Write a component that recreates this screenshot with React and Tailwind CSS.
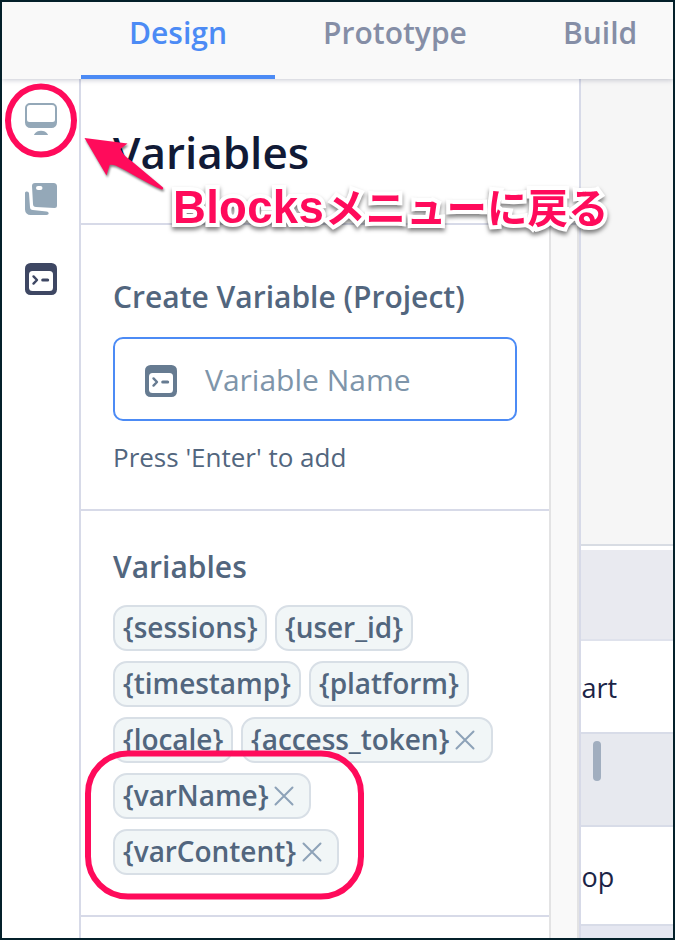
import React from "react";

function TerminalIcon({ className }) {
  return (
    <svg viewBox="0 0 32 32" className={className} fill="none">
      <rect width="32" height="32" rx="5.5" fill="currentColor" />
      <rect x="4" y="8" width="24" height="20" rx="3.5" fill="#fff" />
      <path d="M8.500 13.400 12 17l-3.500 3.600" stroke="currentColor" strokeWidth="2.400" strokeLinecap="round" strokeLinejoin="round" />
      <path d="M17.700 17h5" stroke="currentColor" strokeWidth="3" strokeLinecap="round" />
    </svg>
  );
}

function MonitorIcon() {
  return (
    <svg viewBox="0 0 32 32" className="size-8 text-[#94a8b8]" fill="currentColor">
      <path fillRule="evenodd" d="M5 0h22a5 5 0 0 1 5 5v14.500a5.500 5.500 0 0 1-5.500 5.500h-21A5.500 5.500 0 0 1 0 19.500V5a5 5 0 0 1 5-5Zm0 2a3 3 0 0 0-3 3v11.500A2.500 2.500 0 0 0 4.500 19h23a2.500 2.500 0 0 0 2.500-2.500V5a3 3 0 0 0-3-3Z" />
      <path d="M9 31.500c2-2.700 4-3.700 7-3.700s5 1 7 3.700c0 .3-.2.500-.5.500h-13c-.3 0-.5-.2-.5-.5Z" />
    </svg>
  );
}

function LayersIcon() {
  return (
    <svg viewBox="0 0 32 32" className="size-8 text-[#94a8b8]" fill="currentColor">
      <path fillRule="evenodd" d="M10 0h18.500A3.500 3.500 0 0 1 32 3.500v19a2.500 2.500 0 0 1-2.500 2.500L11 24a3 3 0 0 1-3-3L7 3a3 3 0 0 1 3-3Zm3 3a2 2 0 0 0 0 4h2.500a2 2 0 0 0 0-4Z" />
      <path d="M1.500 8.500C2.800 8.300 4 9.200 4 10.500l1 13.700c.2 1.800 1 2.600 2.800 2.800l13.700 1.500c3 .3 2.800 3.500 0 3.500H5.500A5.500 5.500 0 0 1 0 26.500V10c0-.8.600-1.400 1.500-1.500Z" />
    </svg>
  );
}

function Chip({ name, width, removable }) {
  return (
    <div className={`${width} flex h-[46px] shrink-0 items-center rounded-[14px] border-2 border-[#d8dfe6] bg-[#f1f6f7] pl-2 text-[28px] leading-[36px] font-semibold text-[#52667e]`}>
      <span className="-mt-0.5 tracking-[-0.05px]">{`{${name}}`}</span>
      {removable && (
        <svg viewBox="0 0 20 20" className="ml-1.5 size-5 shrink-0 text-[#8da2b8]" fill="none" stroke="currentColor" strokeWidth="2" strokeLinecap="round">
          <path d="m1.500 1.500 17 17m0-17-17 17" />
        </svg>
      )}
    </div>
  );
}

function Header() {
  return (
    <header className="relative z-10 flex h-[77px] shrink-0 bg-[#f9f9f9] pl-[79px] text-[30px] leading-[61px] font-semibold text-[#858ea6] shadow-[0_1px_5px_rgba(30,40,80,0.25)]">
      <div className="w-[194px] shrink-0 border-b-4 border-[#4c8bf5] text-center text-[#4c8bf5]">Design</div>
      <div className="w-[240px] shrink-0 text-center">Prototype</div>
      <div className="w-[158px] shrink-0 pl-12">Build</div>
    </header>
  );
}

function Panel() {
  return (
    <main className="flex w-[502px] shrink-0 flex-col border-x-2 border-[#d7dae8]">
      <h1 className="h-[144px] shrink-0 pt-[41px] pl-8 text-[44px] leading-[64px] font-semibold text-[#111a36]">Variables</h1>
      <div className="flex flex-1 border-t-2 border-[#d7dae8]">
        <div className="flex w-[468px] shrink-0 flex-col">
          <section className="h-[286px] shrink-0 border-b-2 border-[#d7dae8] pt-[50px] pl-8 text-[#52667e]">
            <h2 className="text-[30px] leading-[43px] font-semibold">Create Variable (Project)</h2>
            <div className="mt-[19px] flex h-[84px] w-[404px] items-center rounded-[10px] border-2 border-[#4c8bf5] pl-[30px]">
              <TerminalIcon className="mt-1 size-8 text-[#667b91]" />
              <span className="ml-7 pt-px text-[30px] leading-[40px] text-[#7e95aa]">Variable Name</span>
            </div>
            <p className="mt-[19px] text-[26px] leading-[34px]">Press 'Enter' to add</p>
          </section>
          <section className="h-[406px] shrink-0 border-b-2 border-[#d7dae8] pt-[34px] pl-8">
            <h2 className="text-[30px] leading-[43px] font-semibold text-[#52667e]">Variables</h2>
            <div className="mt-[17px] flex flex-col gap-2.5">
              <div className="flex gap-2"><Chip name="sessions" width="w-[154px]" /><Chip name="user_id" width="w-[138px]" /></div>
              <div className="flex gap-2"><Chip name="timestamp" width="w-[188px]" /><Chip name="platform" width="w-[160px]" /></div>
              <div className="flex gap-2"><Chip name="locale" width="w-[120px]" /><Chip name="access_token" width="w-[252px]" removable /></div>
              <Chip name="varName" width="w-[198px]" removable />
              <Chip name="varContent" width="w-[226px]" removable />
            </div>
          </section>
        </div>
        <div className="flex-1 border-x-2 border-[#e3e3e4] bg-[#f9f9f9]" />
      </div>
    </main>
  );
}

function Canvas() {
  return (
    <aside className="flex min-w-0 flex-1 flex-col overflow-hidden text-[27px] text-[#1b2446]">
      <div className="h-[467px] shrink-0 border-b-2 border-[#d8dce3] bg-[#f6f6f6]" />
      <div className="mt-1 h-[91px] shrink-0 border-b-2 border-[#dfe2ec] bg-[#e9eaf0]" />
      <div className="flex h-[91px] shrink-0 items-center"><span className="-ml-6 pt-1">Start</span></div>
      <div className="h-[95px] shrink-0 border-y-2 border-[#d8dce8] bg-[#e7e9ef] pt-[7px] pl-3">
        <div className="h-10 w-2 rounded-full bg-[#a1aebf]" />
      </div>
      <div className="flex h-[97px] shrink-0 items-center"><span className="-ml-6 pt-1">Stop</span></div>
      <div className="flex-1 border-t-2 border-[#d8dce8] bg-[#e5e7f1]" />
    </aside>
  );
}

function Annotations() {
  return (
    <div className="pointer-events-none absolute inset-0 z-20">
      <svg viewBox="0 0 675 940" className="absolute inset-0 h-full w-full">
        <g fill="none" stroke="#ff0b5b" strokeWidth="6">
          <ellipse cx="41" cy="120.500" rx="33" ry="34" />
          <rect x="88" y="753.500" width="273" height="143" rx="40" />
        </g>
        <path className="drop-shadow-[1px_2px_1px_rgba(0,0,0,0.5)]" fill="#ff0b5b" d="m84.500 138 43 5.500-7 5.500c2 5 6 9 11 12l31 26c1.500 1 .5 3-1 2.500-16-7-33-18-46-24-3-1-6-1-6 0l-3 10Z" />
      </svg>
      <div className="absolute top-[178px] left-[173px] flex h-[60px] items-center font-bold whitespace-nowrap text-[#ff0b5b] [-webkit-text-stroke:8px_white] [paint-order:stroke_fill] [stroke-linejoin:round] drop-shadow-[0_3px_2px_rgba(0,0,0,0.5)]">
        <span className="font-['Liberation_Sans',sans-serif] text-[45.500px] tracking-[0.3px]">Blocks</span>
        <span className="-mt-1 ml-px font-['Noto_Sans_CJK_JP',sans-serif] text-[40.500px]">メニューに戻る</span>
      </div>
    </div>
  );
}

export default function App() {
  return (
    <div className="relative flex h-[940px] w-[675px] flex-col overflow-hidden border-2 border-[#04202a] bg-white font-['Open_Sans',sans-serif]">
      <Header />
      <div className="flex min-h-0 flex-1">
        <nav className="flex w-[77px] shrink-0 flex-col items-center gap-12 pt-6">
          <MonitorIcon />
          <LayersIcon />
          <TerminalIcon className="size-8 text-[#3e4763]" />
        </nav>
        <Panel />
        <Canvas />
      </div>
      <div className="pointer-events-none absolute -top-0.5 -left-0.5 h-[940px] w-[675px]">
        <Annotations />
      </div>
    </div>
  );
}
